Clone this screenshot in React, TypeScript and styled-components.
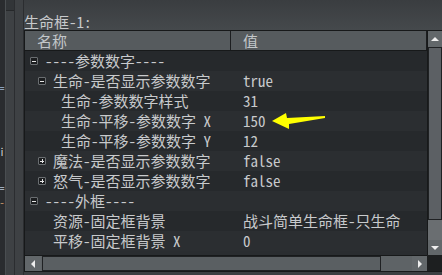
import React from "react";
import styled, { createGlobalStyle } from "styled-components";

const Global = createGlobalStyle`
  html, body { margin: 0; padding: 0; background: #3c3f42; overflow: hidden; }
  #root { width: 442px; height: 275px; overflow: hidden; }
`;

const FONT = `"Noto Sans Mono CJK SC", "DejaVu Sans Mono", "Noto Sans CJK SC", monospace`;

const Page = styled.div`
  width: 442px;
  height: 275px;
  display: flex;
  font-family: ${FONT};
  font-size: 15px;
  color: #c8cacc;
`;

const LeftStrip = styled.div`
  width: 24px;
  display: flex;
  flex-shrink: 0;
`;

const CutPane = styled.div`
  width: 5px;
  background: #2a2c2f;
  border-right: 1px solid #4a4e51;
  overflow: hidden;
  display: flex;
  flex-direction: column;
`;

const CutLine = styled.div<{ $top: number; $color: string }>`
  margin-top: ${(p) => p.$top}px;
  height: 12px;
  font-size: 10px;
  line-height: 12px;
  color: ${(p) => p.$color};
  white-space: nowrap;
  direction: rtl;
  text-align: right;
`;

const GrayCol = styled.div<{ $w: number }>`
  width: ${(p) => p.$w}px;
  background: #3e4144;
  border-right: 1px solid #2b2d30;
  display: flex;
  flex-direction: column;
`;

const TopPatch = styled.div`
  height: 10px;
  background: #323538;
  border-bottom: 1px solid #26282a;
`;

const Main = styled.div`
  flex: 1;
  display: flex;
  flex-direction: column;
  background: linear-gradient(#3a3d40 0px, #45494c 30px, #3c3f42 31px);
`;

const Label = styled.div`
  height: 30px;
  box-sizing: border-box;
  padding-top: 14px;
  line-height: 16px;
  white-space: nowrap;
`;

const TreeBox = styled.div`
  height: 242px;
  box-sizing: border-box;
  border-left: 1px solid #17191a;
  border-top: 1px solid #17191a;
  border-bottom: 1px solid #17191a;
  display: grid;
  grid-template-columns: 402px 15px;
  grid-template-rows: 220px 4px 16px;
  background: #2a2d30;
`;

const ListArea = styled.div`
  display: flex;
  flex-direction: column;
  overflow: hidden;
`;

const Header = styled.div`
  height: 20px;
  box-sizing: border-box;
  border-bottom: 1px solid #17191a;
  background: #565b5e;
  display: flex;
  flex-shrink: 0;
`;

const HeaderCell = styled.div<{ $w?: number }>`
  ${(p) => (p.$w ? `width: ${p.$w}px;` : "flex: 1;")}
  box-sizing: border-box;
  padding-left: 12px;
  line-height: 19px;
  color: #c3c7ca;
  border-right: 1px solid #1c1e20;
`;

const Row = styled.div<{ $alt: boolean }>`
  height: 20px;
  display: flex;
  align-items: center;
  flex-shrink: 0;
  background: ${(p) => (p.$alt ? "#2b2e31" : "#26292c")};
`;

const NameCell = styled.div<{ $depth: number }>`
  width: 205px;
  height: 20px;
  line-height: 20px;
  box-sizing: border-box;
  padding-left: ${(p) => 5 + p.$depth * 8}px;
  display: flex;
  align-items: center;
  white-space: nowrap;
  overflow: hidden;
`;

const ExpSlot = styled.div`
  width: 8px;
  height: 8px;
  margin-right: 7px;
  flex-shrink: 0;
  display: flex;
`;

const ExpBox = styled.div`
  width: 8px;
  height: 8px;
  box-sizing: border-box;
  border: 1px solid #6a6e71;
  border-radius: 1px;
  background: #1b1d1f;
  position: relative;
  &::before {
    content: "";
    position: absolute;
    left: 1px;
    top: 2.5px;
    width: 4px;
    height: 1px;
    background: #e6e6e6;
  }
`;

const PlusBox = styled(ExpBox)`
  &::after {
    content: "";
    position: absolute;
    left: 2.5px;
    top: 1px;
    width: 1px;
    height: 4px;
    background: #e6e6e6;
  }
`;

const ValueCell = styled.div`
  flex: 1;
  height: 20px;
  line-height: 20px;
  padding-left: 13px;
  white-space: nowrap;
  position: relative;
`;

const Arrow = styled.svg`
  position: absolute;
  left: 41px;
  top: 1px;
  width: 56px;
  height: 18px;
`;

const VScroll = styled.div`
  grid-row: 1 / 3;
  border-left: 1px solid #17191a;
  background: #6a6e71;
  display: flex;
  flex-direction: column;
`;

const SBtn = styled.div<{ $h: number; $w: number }>`
  height: ${(p) => p.$h}px;
  width: ${(p) => p.$w}px;
  box-sizing: border-box;
  flex-shrink: 0;
  background: #62676a;
  display: flex;
  align-items: center;
  justify-content: center;
`;

const VThumb = styled.div`
  height: 173px;
  box-sizing: border-box;
  border: 1px solid #1f2123;
  background: #5c6064;
  flex-shrink: 0;
`;

const VTrack = styled.div`
  flex: 1;
`;

const HScroll = styled.div`
  grid-row: 3;
  display: flex;
  background: #5e6366;
  border-top: 1px solid #17191a;
  box-sizing: border-box;
`;

const HThumb = styled.div`
  width: 339px;
  box-sizing: border-box;
  border: 1px solid #1f2123;
  background: #5a5f62;
  margin-left: 1px;
`;

const HTrack = styled.div`
  flex: 1;
`;

const Corner = styled.div`
  grid-row: 3;
  grid-column: 2;
  background: #1d1f20;
`;

const Spacer = styled.div`
  grid-row: 2;
  grid-column: 1;
  background: #2a2d30;
`;

type Tri = "up" | "down" | "left" | "right";
const TriIcon = ({ dir }: { dir: Tri }) => {
  const pts: Record<Tri, string> = {
    up: "0,5 4,1 8,5",
    down: "0,1 8,1 4,5",
    left: "5,0 5,8 1,4",
    right: "1,0 1,8 5,4",
  };
  const vertical = dir === "up" || dir === "down";
  return (
    <svg width={vertical ? 8 : 6} height={vertical ? 6 : 8} viewBox={vertical ? "0 0 8 6" : "0 0 6 8"}>
      <polygon points={pts[dir]} fill="#eeeeee" />
    </svg>
  );
};

type Item = { depth: number; exp?: "-" | "+"; name: string; value: string; arrow?: boolean };

const items: Item[] = [
  { depth: 0, exp: "-", name: "----参数数字----", value: "" },
  { depth: 1, exp: "-", name: "生命-是否显示参数数字", value: "true" },
  { depth: 2, name: "生命-参数数字样式", value: "31" },
  { depth: 2, name: "生命-平移-参数数字 X", value: "150", arrow: true },
  { depth: 2, name: "生命-平移-参数数字 Y", value: "12" },
  { depth: 1, exp: "+", name: "魔法-是否显示参数数字", value: "false" },
  { depth: 1, exp: "+", name: "怒气-是否显示参数数字", value: "false" },
  { depth: 0, exp: "-", name: "----外框----", value: "" },
  { depth: 1, name: "资源-固定框背景", value: "战斗简单生命框-只生命" },
  { depth: 1, name: "平移-固定框背景 X", value: "0" },
];

export default function App() {
  return (
    <>
      <Global />
      <Page>
        <LeftStrip>
          <CutPane>
            <CutLine $top={82} $color="#9fb7d6">==</CutLine>
            <CutLine $top={52} $color="#d8d8d8">i</CutLine>
            <CutLine $top={24} $color="#b8c6d8">==</CutLine>
            <CutLine $top={2} $color="#d9a070">-</CutLine>
          </CutPane>
          <GrayCol $w={9}>
            <TopPatch />
          </GrayCol>
          <GrayCol $w={9} />
        </LeftStrip>
        <Main>
          <Label>生命框-1:</Label>
          <TreeBox>
            <ListArea>
              <Header>
                <HeaderCell $w={206}>名称</HeaderCell>
                <HeaderCell>值</HeaderCell>
              </Header>
              {items.map((it, i) => (
                <Row key={i} $alt={i % 2 === 1}>
                  <NameCell $depth={it.depth}>
                    <ExpSlot>{it.exp === "-" ? <ExpBox /> : it.exp === "+" ? <PlusBox /> : null}</ExpSlot>
                    {it.name}
                  </NameCell>
                  <ValueCell>
                    {it.value}
                    {it.arrow && (
                      <Arrow viewBox="0 0 56 18">
                        <polygon points="1,9 15,1 16,6 54,4 54,6 18,12 18,17" fill="#ffff00" />
                      </Arrow>
                    )}
                  </ValueCell>
                </Row>
              ))}
            </ListArea>
            <VScroll>
              <SBtn $h={16} $w={14}>
                <TriIcon dir="up" />
              </SBtn>
              <VThumb />
              <VTrack />
              <SBtn $h={15} $w={14}>
                <TriIcon dir="down" />
              </SBtn>
            </VScroll>
            <Spacer />
            <HScroll>
              <SBtn $h={15} $w={16}>
                <TriIcon dir="left" />
              </SBtn>
              <HThumb />
              <HTrack />
              <SBtn $h={15} $w={15}>
                <TriIcon dir="right" />
              </SBtn>
            </HScroll>
            <Corner />
          </TreeBox>
        </Main>
      </Page>
    </>
  );
}
